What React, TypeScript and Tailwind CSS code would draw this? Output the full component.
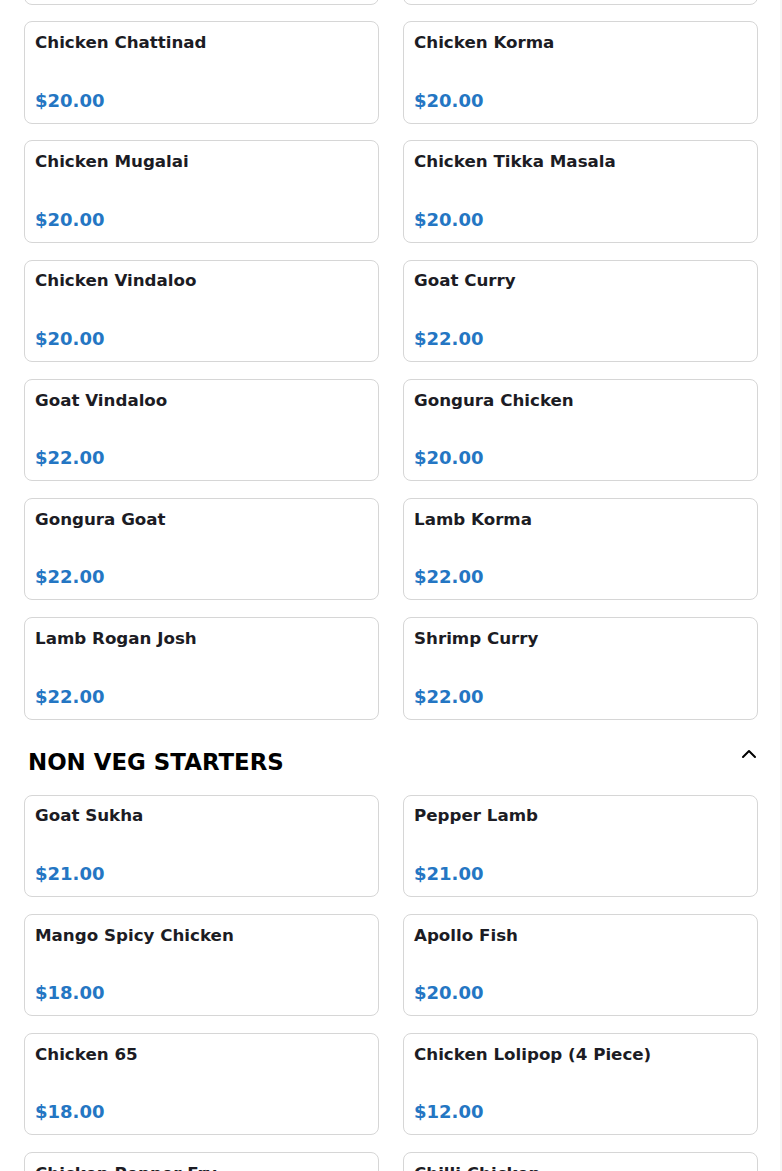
import React from "react";
import { ChevronUp } from "lucide-react";

type Item = { name: string; price: string };

const curries: Item[] = [
  { name: "", price: "" },
  { name: "", price: "" },
  { name: "Chicken Chattinad", price: "$20.00" },
  { name: "Chicken Korma", price: "$20.00" },
  { name: "Chicken Mugalai", price: "$20.00" },
  { name: "Chicken Tikka Masala", price: "$20.00" },
  { name: "Chicken Vindaloo", price: "$20.00" },
  { name: "Goat Curry", price: "$22.00" },
  { name: "Goat Vindaloo", price: "$22.00" },
  { name: "Gongura Chicken", price: "$20.00" },
  { name: "Gongura Goat", price: "$22.00" },
  { name: "Lamb Korma", price: "$22.00" },
  { name: "Lamb Rogan Josh", price: "$22.00" },
  { name: "Shrimp Curry", price: "$22.00" },
];

const starters: Item[] = [
  { name: "Goat Sukha", price: "$21.00" },
  { name: "Pepper Lamb", price: "$21.00" },
  { name: "Mango Spicy Chicken", price: "$18.00" },
  { name: "Apollo Fish", price: "$20.00" },
  { name: "Chicken 65", price: "$18.00" },
  { name: "Chicken Lolipop (4 Piece)", price: "$12.00" },
  { name: "Chicken Pepper Fry", price: "$18.00" },
  { name: "Chilli Chicken", price: "$18.00" },
];

function Card({ item }: { item: Item }) {
  return (
    <div className="h-[102.4px] rounded-lg border border-[#d6d6d6] bg-white pl-[10px] pr-[10px] pt-[7.8px] pb-[9px] flex flex-col justify-between">
      <div className="text-[16.7px] leading-[1.5] font-bold text-[#1c1c24]">{item.name}</div>
      <div className="text-[18px] leading-[1.5] font-bold text-[#2476c3]">{item.price}</div>
    </div>
  );
}

function Grid({ items }: { items: Item[] }) {
  return (
    <div className="grid grid-cols-2 gap-x-6 gap-y-[16.8px]">
      {items.map((it, i) => (
        <Card key={i} item={it} />
      ))}
    </div>
  );
}

export default function App() {
  return (
    <div
      className="min-h-screen bg-white flex overflow-hidden"
      style={{ fontFamily: '"DejaVu Sans", Verdana, sans-serif' }}
    >
      <div className="flex-1 pl-6 pr-[22px] h-[1171px] overflow-hidden">
        <div className="mt-[-97.9px]">
          <Grid items={curries} />
          <div className="flex items-start justify-between pl-1 pr-0 pt-[26px] pb-[17px]">
            <h2 className="text-[22.9px] leading-[32px] font-bold text-black">NON VEG STARTERS</h2>
            <ChevronUp className="mt-[-4px] mr-[-3px] text-black" size={24} strokeWidth={2} />
          </div>
          <Grid items={starters} />
        </div>
      </div>
      <div className="w-[2px] bg-[#f6f6f6]" />
    </div>
  );
}
